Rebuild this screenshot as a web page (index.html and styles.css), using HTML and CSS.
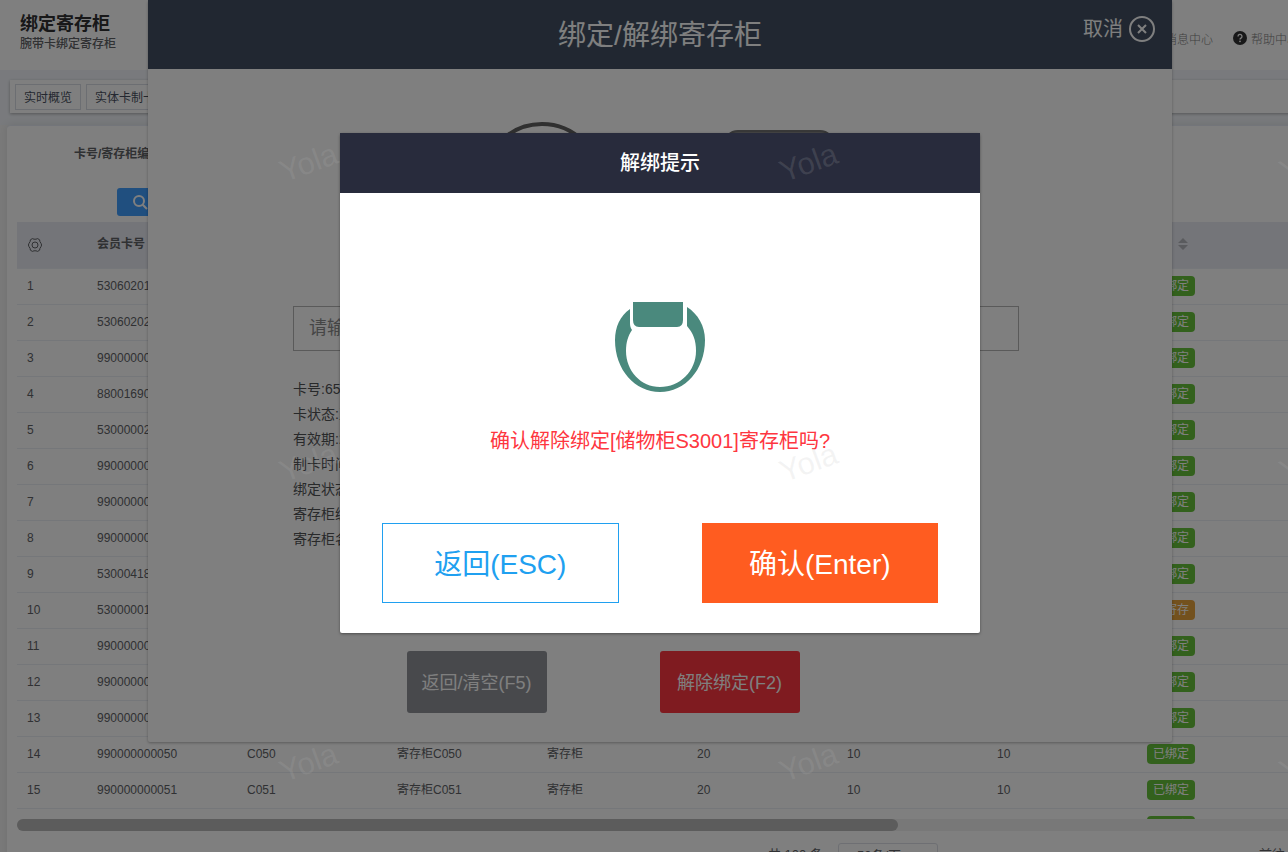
FILE: index.html
```
<!DOCTYPE html>
<html lang="zh-CN">
<head>
    <meta charset="UTF-8">
    <meta name="viewport" content="width=device-width, initial-scale=1.0">
    <title>绑定寄存柜</title>
    <link rel="stylesheet" href="styles.css">
</head>
<body>
    <div class="app">
        <header class="header">
            <div class="header-title">
                <h1>绑定寄存柜</h1>
                <p>腕带卡绑定寄存柜</p>
            </div>
            <nav class="header-nav">
                <a href="#">消息中心</a>
                <a href="#">
                    <svg width="14" height="14" viewBox="0 0 14 14"><circle cx="7" cy="7" r="7" fill="#303133"/><path d="M5 5.4a2 2 0 1 1 3 1.7c-.7.4-1 .7-1 1.3" fill="none" stroke="#fff" stroke-width="1.3"/><circle cx="7" cy="10.3" r=".9" fill="#fff"/></svg>
                    帮助中心
                </a>
            </nav>
        </header>

        <div class="tabs-wrapper">
            <div class="tabs">
                <button class="tab">实时概览</button>
                <button class="tab">实体卡制卡</button>
            </div>
        </div>

        <main class="card">
            <form class="search">
                <div class="search-row">
                    <label for="keyword">卡号/寄存柜编号</label>
                    <input id="keyword" type="text">
                </div>
                <button class="search-btn" type="button">
                    <svg width="16" height="16" viewBox="0 0 16 16" fill="none" stroke="#fff" stroke-width="2"><circle cx="7" cy="7" r="5"/><path d="M10.7 10.7 15 15"/></svg>
                    查询
                </button>
            </form>

            <div class="table-wrapper">
                <table class="table">
                    <thead>
                        <tr>
                            <th class="col-index">
                                <svg width="16" height="16" viewBox="0 0 16 16" fill="none" stroke="#606266"><path d="M5.4 1.6 7 2.2H9L10.6 1.6 12.6 2.8 12.9 4.6 14 6.3 14.6 8 14 9.7 12.9 11.4 12.6 13.2 10.6 14.4 9 13.8H7L5.4 14.4 3.4 13.2 3.1 11.4 2 9.7 1.4 8 2 6.3 3.1 4.6 3.4 2.8Z" stroke-linejoin="round"/><circle cx="8" cy="8" r="3"/></svg>
                            </th>
                            <th>会员卡号</th>
                            <th></th>
                            <th></th>
                            <th></th>
                            <th></th>
                            <th></th>
                            <th></th>
                            <th>
                                <span class="sortable">状态
                                    <svg width="10" height="12" viewBox="0 0 10 12" fill="#b4b6bc"><path d="M0 5 5 0 10 5ZM0 7H10L5 12Z"/></svg>
                                </span>
                            </th>
                            <th></th>
                        </tr>
                    </thead>
                    <tbody></tbody>
                </table>
            </div>
            <div class="scrollbar"><div class="scrollbar-thumb"></div></div>

            <div class="pagination">
                <span>共 100 条</span>
                <select aria-label="每页条数"><option>50条/页</option></select>
                <span class="jump">前往</span>
            </div>
        </main>

        <!-- bind / unbind dialog -->
        <div class="layer">
            <section class="bind">
                <div class="bind-header">
                    <h2>绑定/解绑寄存柜</h2>
                    <button class="cancel">
                        取消
                        <svg width="26" height="26" viewBox="0 0 26 26" fill="none" stroke="#fff" stroke-width="2"><circle cx="13" cy="13" r="12"/><path d="m9 9 8 8M17 9l-8 8"/></svg>
                    </button>
                </div>
                <div class="bind-body">
                    <svg class="bind-icons" width="310" height="128" viewBox="0 0 310 128" fill="none">
                        <circle cx="65" cy="60" r="58" stroke="#606060" stroke-width="4"/>
                        <rect x="247" y="9" width="110" height="80" rx="14" fill="#8a8a8a"/>
                        <rect x="247" y="9" width="110" height="80" rx="14" stroke="#707070" stroke-width="2"/>
                    </svg>
                    <input class="bind-input" type="text" aria-label="卡号" placeholder="请输入卡号">
                    <ul class="bind-info">
                        <li>卡号:65</li>
                        <li>卡状态:正常</li>
                        <li>有效期:2</li>
                        <li>制卡时间:</li>
                        <li>绑定状态:</li>
                        <li>寄存柜编号:</li>
                        <li>寄存柜名称:</li>
                    </ul>
                    <div class="bind-footer">
                        <button class="btn-clear">返回/清空(F5)</button>
                        <button class="btn-unbind">解除绑定(F2)</button>
                    </div>
                </div>
            </section>
        </div>

        <!-- confirm dialog -->
        <div class="layer mask">
            <section class="confirm">
                <h2>解绑提示</h2>
                <div class="confirm-body">
                    <svg width="90" height="90" viewBox="0 0 90 90" fill="#4a897d">
                        <path d="M18 0H68V18Q68 25 62 25H24Q18 25 18 18Z"/>
                        <path d="M15 7C5 14 0 25 0 38C0 68 20 90 45 90C70 90 90 68 90 38C90 24 83 12 72 5L72 24C78 31 81 38 81 49C81 69 65 85 45 85C26 85 11 69 11 49C11 40 13 34 17 28C15 25 15 23 15 20Z"/>
                    </svg>
                    <p>确认解除绑定[储物柜S3001]寄存柜吗?</p>
                    <div class="confirm-footer">
                        <button class="btn-back">返回(ESC)</button>
                        <button class="btn-ok">确认(Enter)</button>
                    </div>
                </div>
            </section>
        </div>

        <div class="watermark" aria-hidden="true">
            <span>Yola</span><span>Yola</span><span>Yola</span>
            <span>Yola</span><span>Yola</span><span>Yola</span>
            <span>Yola</span><span>Yola</span><span>Yola</span>
        </div>
    </div>

    <script>
        // table data
        const rows = [
            { card: '53060201' },
            { card: '53060202' },
            { card: '99000000' },
            { card: '88001690' },
            { card: '53000002' },
            { card: '99000000' },
            { card: '99000000' },
            { card: '99000000' },
            { card: '53000418' },
            { card: '53000001', status: '已寄存' },
            { card: '99000000' },
            { card: '99000000' },
            { card: '99000000' },
            { card: '990000000050', code: 'C050', name: '寄存柜C050', type: '寄存柜', a: 20, b: 10, c: 10 },
            { card: '990000000051', code: 'C051', name: '寄存柜C051', type: '寄存柜', a: 20, b: 10, c: 10 },
            { card: '' },
        ]

        // render the rows
        const tbody = document.querySelector('.table tbody')
        tbody.innerHTML = rows.map((row, i) => {
            const cells = [row.card, row.code, row.name, row.type, row.a, row.b, row.c]
            const tag = row.status ? `<span class="tag warning">${row.status}</span>` : '<span class="tag">已绑定</span>'
            return `<tr><td>${i + 1}</td>${cells.map(c => `<td>${c ?? ''}</td>`).join('')}<td>${tag}</td><td></td></tr>`
        }).join('')
    </script>
</body>
</html>
```
FILE: styles.css
```
* {
    box-sizing: border-box;
}

body {
    margin: 0;
    overflow: hidden;
    font-family: "Liberation Sans", "Noto Sans CJK SC", sans-serif;
    font-size: 12px;
    color: #606266;
    background: #f5f5f5;
}

h1, h2, p, ul {
    margin: 0;
    padding: 0;
}

button, input, select {
    font-family: inherit;
}

button {
    padding: 0;
    cursor: pointer;
}

.app {
    position: relative;
    min-width: 1320px;
    height: 100vh;
    overflow: hidden;
}

/* header */
.header {
    display: flex;
    justify-content: space-between;
    height: 70px;
    padding: 12px 21px 0 20px;
    background: #fff;
}

.header-title h1 {
    font-size: 18px;
    line-height: 24px;
    color: #303133;
}

.header-title p {
    font-weight: 500;
    line-height: 16px;
}

.header-nav {
    display: flex;
    gap: 20px;
    height: 52px;
    align-items: center;
}

.header-nav a {
    display: flex;
    align-items: center;
    gap: 4px;
    color: #808080;
    font-weight: 300;
    text-decoration: none;
}

/* tabs */
.tabs-wrapper {
    padding: 10px 10px 12px;
    background: #f2f5fa;
}

.tabs {
    display: flex;
    gap: 5px;
    padding: 4px 5px 3px;
    background: #fff;
    box-shadow: 0 1px 3px rgba(0, 0, 0, 0.3);
}

.tab {
    height: 26px;
    padding: 0 8px 2px;
    border: 1px solid #d8dce5;
    background: #fff;
    color: #495060;
    font-size: 12px;
}

/* card */
.card {
    height: 800px;
    margin: 0 7px;
    padding: 13px 10px;
    background: #fff;
    border-top: 1px solid #e6ebf5;
    border-radius: 4px;
    box-shadow: 0 0 10px rgba(0, 0, 0, 0.1);
}

.search-row {
    display: flex;
    align-items: center;
    gap: 12px;
    height: 28px;
    padding-left: 57px;
    font-weight: 700;
}

.search-row label {
    padding-bottom: 2px;
}

.search-row input {
    width: 160px;
    height: 28px;
    border: 1px solid #dcdfe6;
    border-radius: 4px;
}

.search-btn {
    display: flex;
    align-items: center;
    gap: 5px;
    height: 28px;
    margin: 21px 0 6px 100px;
    padding: 0 15px;
    border: 0;
    border-radius: 3px;
    background: #409eff;
    color: #fff;
    font-size: 12px;
}

/* table */
.table-wrapper {
    height: 597px;
    overflow: hidden;
}

.table {
    width: 1420px;
    table-layout: fixed;
    border-collapse: separate;
    border-spacing: 0;
}

.table th,
.table td {
    width: 150px;
    height: 36px;
    padding: 0 10px 2px;
    text-align: left;
    line-height: 20px;
    border-bottom: 1px solid #ebeef5;
}

.table th {
    height: 47px;
    background: #e8eaf2;
}

.table .col-index {
    width: 70px;
    padding-bottom: 0;
}

.col-index svg {
    display: block;
}

.sortable {
    display: flex;
    align-items: center;
    gap: 7px;
}

.tag {
    display: block;
    width: 48px;
    height: 20px;
    border-radius: 4px;
    background: #67c23a;
    color: #fff;
    text-align: center;
}

.tag.warning {
    background: #e6a23c;
}

.scrollbar {
    height: 12px;
    background: #f1f1f1;
    border-radius: 6px;
}

.scrollbar-thumb {
    width: 881px;
    height: 12px;
    border-radius: 6px;
    background: #b8b8b8;
}

.pagination {
    display: flex;
    align-items: flex-start;
    gap: 15px;
    padding: 12px 18px 0 751px;
    font-size: 13px;
    line-height: 24px;
}

.pagination select {
    width: 100px;
    height: 28px;
    padding: 0 12px 4px 18px;
    appearance: none;
    border: 1px solid #dcdfe6;
    border-radius: 3px;
    background: #fff;
    color: #606266;
    font-size: 13px;
}

.pagination .jump {
    margin-left: auto;
}

/* dialogs */
.layer {
    position: absolute;
    inset: 0;
    display: flex;
    justify-content: center;
    align-items: flex-start;
}

.mask {
    padding-top: 133px;
    background: rgba(0, 0, 0, 0.5);
}

.bind {
    width: 1024px;
    background: #fff;
    border-radius: 2px;
    box-shadow: 0 1px 3px rgba(0, 0, 0, 0.3);
}

.bind-header {
    display: grid;
    grid-template-columns: 1fr auto 1fr;
    align-items: start;
    height: 69px;
    padding: 14px 17px;
    background: #424f63;
    color: #fff;
}

.bind-header h2 {
    grid-column: 2;
    font-size: 28px;
    font-weight: 400;
    line-height: 44px;
}

.cancel {
    justify-self: end;
    display: flex;
    align-items: center;
    gap: 6px;
    height: 30px;
    border: 0;
    background: none;
    color: #fff;
    font-size: 20px;
    line-height: 24px;
}

.bind-body {
    padding: 53px 153px 29px 145px;
}

.bind-icons {
    display: block;
    margin-left: 184px;
    overflow: visible;
}

.bind-input {
    width: 100%;
    height: 45px;
    margin: 56px 0 26px;
    padding: 0 15px;
    border: 1px solid #b4b4b4;
    font-size: 18px;
}

.bind-input::placeholder {
    color: #8c8c8c;
}

.bind-info {
    list-style: none;
    font-size: 14px;
    line-height: 25px;
    color: #505255;
}

.bind-footer {
    display: flex;
    justify-content: center;
    gap: 113px;
    margin: 99px 106px 0 0;
}

.bind-footer button {
    width: 140px;
    height: 62px;
    padding-bottom: 3px;
    border: 0;
    border-radius: 3px;
    color: #fff;
    font-size: 18px;
}

.bind-footer .btn-clear {
    background: #909399;
}

.bind-footer .btn-unbind {
    background: #fe3640;
}

.confirm {
    width: 640px;
    background: #fff;
    border-radius: 2px;
    box-shadow: 0 1px 3px rgba(0, 0, 0, 0.4);
}

.confirm h2 {
    background: #282b3c;
    color: #fff;
    font-size: 20px;
    font-weight: 500;
    line-height: 60px;
    text-align: center;
}

.confirm-body {
    display: flex;
    flex-direction: column;
    align-items: center;
    padding: 109px 42px 30px;
}

.confirm-body p {
    margin: 34px 0 67px;
    color: #fe3640;
    font-size: 20px;
    line-height: 30px;
}

.confirm-footer {
    display: grid;
    grid-template-columns: 1fr 1fr;
    gap: 83px;
    width: 100%;
}

.confirm-footer button {
    height: 80px;
    padding-bottom: 3px;
    font-size: 28px;
}

.confirm-footer .btn-back {
    border: 1px solid #20a0f0;
    background: #fff;
    color: #20a0f0;
}

.confirm-footer .btn-ok {
    border: 0;
    background: #ff5c20;
    color: #fff;
}

/* watermark */
.watermark {
    position: absolute;
    inset: 13px auto auto 59px;
    display: grid;
    grid-template-columns: repeat(3, 500px);
    grid-auto-rows: 300px;
    place-items: center;
    color: rgba(184, 184, 184, 0.16);
    font-size: 31px;
    pointer-events: none;
}

.watermark span {
    transform: rotate(-20deg);
}
```
